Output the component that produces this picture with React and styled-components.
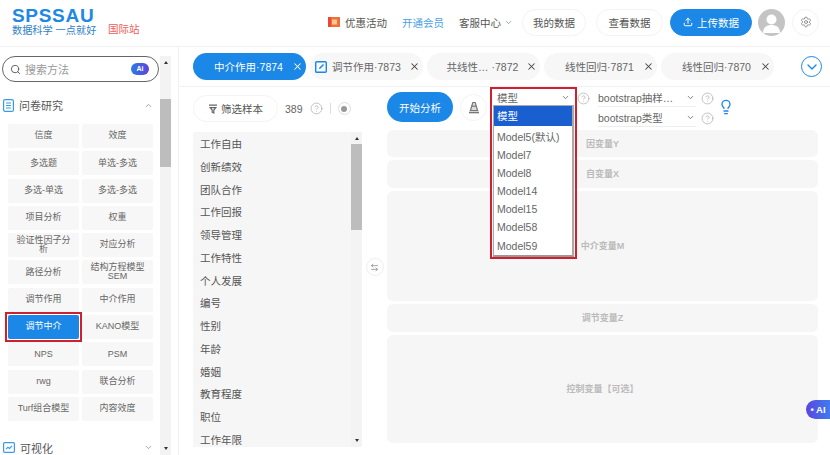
import React from "react";
import styled, { createGlobalStyle } from "styled-components";
import { Search, ChevronUp, ChevronDown, X, Settings, Lightbulb, CircleHelp, Upload, ArrowLeftRight } from "lucide-react";

const Global = createGlobalStyle`
  html, body { margin: 0; padding: 0; background: #fff; }
  body { font-family: "Liberation Sans", "Noto Sans CJK SC", sans-serif; color: #555; width: 830px; height: 455px; overflow: hidden; }
  * { box-sizing: border-box; }
`;

const Page = styled.div`
  position: relative;
  width: 830px;
  height: 455px;
  overflow: hidden;
  display: flex;
  flex-direction: column;
`;
const Header = styled.header`
  height: 47px;
  flex: none;
  display: flex;
  align-items: center;
  padding: 0 11px 2px 12px;
  border-bottom: 1px solid #f1f1f1;
`;
const Logo = styled.div`
  width: 96px;
  display: flex;
  flex-direction: column;
`;
const LogoMark = styled.div`
  font-size: 19px;
  line-height: 17px;
  font-weight: 700;
  letter-spacing: 0.7px;
  color: #1e88e5;
`;
const LogoSub = styled.div`
  font-size: 10.2px;
  line-height: 14px;
  color: #2f7fc9;
  white-space: nowrap;
`;
const Intl = styled.div`
  margin-top: 13px;
  font-size: 10.5px;
  color: #ef5a5a;
`;
const Spacer = styled.div`
  flex: 1;
`;
const NavLink = styled.div`
  display: flex;
  align-items: center;
  gap: ${(p) => p.$gap || 0}px;
  font-size: 10.5px;
  color: ${(p) => p.$color || "#555"};
  margin-right: ${(p) => p.$mr || 15}px;
`;
const HeadBtn = styled.div`
  height: 27px;
  width: ${(p) => p.$w}px;
  margin-right: ${(p) => p.$mr}px;
  border-radius: 14px;
  border: 1px solid ${(p) => (p.$primary ? "#1b87e6" : "#f3f3f3")};
  background: ${(p) => (p.$primary ? "#1b87e6" : "#fff")};
  color: ${(p) => (p.$primary ? "#fff" : "#555")};
  font-size: 10.5px;
  display: flex;
  align-items: center;
  justify-content: center;
  gap: 4px;
`;
const Avatar = styled.div`
  width: 27px;
  height: 27px;
  border-radius: 50%;
  background: #c4c4c4;
  margin-right: 7px;
  overflow: hidden;
`;
const GearBtn = styled.div`
  width: 27px;
  height: 27px;
  border-radius: 50%;
  border: 1px solid #f3f3f3;
  display: flex;
  align-items: center;
  justify-content: center;
  color: #777;
`;
const Body = styled.div`
  flex: 1;
  display: flex;
  min-height: 0;
`;
const Sidebar = styled.aside`
  width: 179px;
  flex: none;
  display: flex;
  padding: 9px 7px 0 2px;
  border-right: 1px solid #f1f1f1;
  overflow: hidden;
`;
const SideMain = styled.div`
  width: 158px;
  flex: none;
  display: flex;
  flex-direction: column;
`;
const SearchBox = styled.div`
  height: 26px;
  width: 157px;
  border: 1px solid #666;
  border-radius: 13px;
  display: flex;
  align-items: center;
  padding: 0 9px 0 7px;
  gap: 4px;
  font-size: 11px;
  color: #999;
  flex: none;
`;
const AiTag = styled.span`
  margin-left: auto;
  width: 18px;
  height: 12px;
  border-radius: 6px;
  background: linear-gradient(90deg, #2e7be8, #5a45d8);
  color: #fff;
  font-size: 7px;
  font-weight: 700;
  line-height: 12px;
  text-align: center;
`;
const SectionTitle = styled.div`
  display: flex;
  align-items: center;
  gap: 5px;
  height: 20px;
  margin-top: ${(p) => p.$mt}px;
  padding: 0 7px 0 1px;
  font-size: 11px;
  color: #555;
  flex: none;
`;
const SectionChevron = styled.span`
  margin-left: auto;
  display: flex;
  color: #888;
`;
const MethodGrid = styled.div`
  display: grid;
  grid-template-columns: 71px 71px;
  grid-auto-rows: 24px;
  column-gap: 3px;
  row-gap: 3.3px;
  margin: 9px 0 0 6px;
  flex: none;
`;
const Method = styled.div`
  position: relative;
  border-radius: 2px;
  background: ${(p) => (p.$active ? "#1b87e6" : "#f7f7f7")};
  color: ${(p) => (p.$active ? "#fff" : "#666")};
  font-size: 9px;
  line-height: 9.5px;
  display: flex;
  align-items: center;
  justify-content: center;
  text-align: center;
  padding: 0 6px;
  ${(p) =>
    p.$active &&
    `&::after {
      content: "";
      position: absolute;
      inset: -3px;
      border: 2px solid #d01f2e;
    }`}
`;
const Track = styled.div`
  width: ${(p) => p.$w}px;
  flex: none;
  background: #f3f3f3;
  display: flex;
  flex-direction: column;
  align-items: center;
`;
const Arrow = styled.div`
  width: 0;
  height: 0;
  flex: none;
  border-left: 2.5px solid transparent;
  border-right: 2.5px solid transparent;
  ${(p) => (p.$down ? "border-top: 3px solid #333;" : "border-bottom: 3px solid #333;")}
  margin: ${(p) => (p.$down ? "auto 0 5px" : "5px 0 0")};
`;
const Thumb = styled.div`
  width: 100%;
  height: ${(p) => p.$h}px;
  margin-top: ${(p) => p.$mt}px;
  background: #bdbdbd;
  flex: none;
`;
const Main = styled.main`
  flex: 1;
  display: flex;
  flex-direction: column;
  min-width: 0;
`;
const TabBar = styled.div`
  height: 40px;
  flex: none;
  display: flex;
  align-items: flex-start;
  padding: 6px 0 0 14px;
  gap: 4px;
  border-bottom: 1px solid #f1f1f1;
`;
const Tab = styled.div`
  width: 113px;
  height: 27px;
  border-radius: 14px;
  background: ${(p) => (p.$active ? "#1b87e6" : "#f7f7f7")};
  color: ${(p) => (p.$active ? "#fff" : "#666")};
  font-size: 10.5px;
  display: flex;
  align-items: center;
  justify-content: ${(p) => (p.$edit ? "flex-start" : "center")};
  gap: 5px;
  position: relative;
  padding: ${(p) => (p.$edit ? "0 0 0 5px" : "0 2px 0 0")};
  white-space: nowrap;
`;
const TabClose = styled.span`
  position: absolute;
  right: 3px;
  top: 8px;
  display: flex;
  color: ${(p) => (p.$active ? "#fff" : "#444")};
`;
const EditIcon = styled.span`
  display: flex;
  color: #1b87e6;
`;
const TabToggle = styled.div`
  width: 21px;
  height: 21px;
  border-radius: 50%;
  border: 1.5px solid #1b87e6;
  color: #1b87e6;
  display: flex;
  align-items: center;
  justify-content: center;
  margin: 3px 0 0 23px;
  flex: none;
`;
const Content = styled.div`
  flex: 1;
  display: flex;
  min-height: 0;
`;
const LeftCol = styled.div`
  width: 169px;
  margin-left: 14px;
  flex: none;
  display: flex;
  flex-direction: column;
  padding-top: 8px;
`;
const FilterRow = styled.div`
  display: flex;
  align-items: center;
  height: 27px;
  flex: none;
  font-size: 10.5px;
  color: #666;
`;
const FilterBtn = styled.div`
  width: 85px;
  height: 27px;
  border: 1px solid #f3f3f3;
  border-radius: 14px;
  display: flex;
  align-items: center;
  justify-content: center;
  gap: 3px;
  font-size: 10.5px;
  color: #555;
  margin-right: 7px;
`;
const Help = styled.span`
  display: flex;
  color: #aaa;
  margin-left: ${(p) => p.$ml || 0}px;
  flex: none;
`;
const Divider = styled.span`
  width: 1px;
  height: 11px;
  background: #ddd;
  margin: 0 7px;
`;
const DotBtn = styled.span`
  width: 13px;
  height: 13px;
  border-radius: 50%;
  border: 1px solid #ddd;
  display: flex;
  align-items: center;
  justify-content: center;
  &::after {
    content: "";
    width: 6px;
    height: 6px;
    border-radius: 50%;
    background: #999;
  }
`;
const VarList = styled.div`
  margin-top: 10px;
  height: 315px;
  background: #f6f6f6;
  border-radius: 2px;
  display: flex;
  overflow: hidden;
  flex: none;
`;
const VarItems = styled.div`
  flex: 1;
  padding: 1px 0 0 7px;
  overflow: hidden;
`;
const VarItem = styled.div`
  height: 22.75px;
  line-height: 22.75px;
  font-size: 10.5px;
  color: #555;
`;
const SwapCol = styled.div`
  width: 25px;
  flex: none;
  display: flex;
  align-items: flex-start;
  justify-content: center;
  padding-top: 171px;
`;
const SwapBtn = styled.div`
  width: 18px;
  height: 18px;
  border-radius: 50%;
  border: 1px solid #eee;
  color: #888;
  display: flex;
  align-items: center;
  justify-content: center;
`;
const RightCol = styled.div`
  width: 431px;
  flex: none;
  display: flex;
  flex-direction: column;
`;
const Toolbar = styled.div`
  height: 43px;
  flex: none;
  display: flex;
  align-items: flex-start;
  padding-top: 5px;
`;
const StartBtn = styled.div`
  width: 66px;
  height: 30px;
  border-radius: 15px;
  background: #1b87e6;
  color: #fff;
  font-size: 10.5px;
  display: flex;
  align-items: center;
  justify-content: center;
  margin-right: 7px;
`;
const RoundBtn = styled.div`
  width: 27px;
  height: 27px;
  border-radius: 50%;
  border: 1px solid #f3f3f3;
  margin: 2px 6px 0 0;
  display: flex;
  align-items: center;
  justify-content: center;
`;
const ModelWrap = styled.div`
  position: relative;
  width: 77px;
  margin: -3px 0 0 2px;
`;
const SelectLine = styled.div`
  width: ${(p) => p.$w}px;
  height: 18px;
  display: flex;
  align-items: center;
  justify-content: space-between;
  font-size: 10.5px;
  color: #666;
  border-bottom: 1px solid #eee;
  padding: 0 1px 0 ${(p) => p.$pl || 0}px;
  white-space: nowrap;
`;
const RedBox = styled.div`
  position: absolute;
  left: -5px;
  top: -2px;
  width: 87px;
  height: 172px;
  border: 2px solid #d01f2e;
  pointer-events: none;
  z-index: 3;
`;
const Dropdown = styled.div`
  position: absolute;
  left: -2px;
  top: 16px;
  width: 81px;
  height: 152px;
  background: #fff;
  border: 1px solid #aaa;
  border-bottom: 2px solid #999;
  border-right: 2px solid #aaa;
  z-index: 2;
`;
const DropItem = styled.div`
  height: ${(p) => (p.$selected ? 20 : 18.2)}px;
  line-height: ${(p) => (p.$selected ? 20 : 18.2)}px;
  padding-left: 3px;
  margin-bottom: ${(p) => (p.$selected ? 1.5 : 0)}px;
  background: ${(p) => (p.$selected ? "#1a5fd0" : "transparent")};
  color: ${(p) => (p.$selected ? "#fff" : "#666")};
  font-size: 10.5px;
  white-space: nowrap;
`;
const HelpSlot = styled.div`
  margin: 0 8px 0 5px;
  display: flex;
  color: #aaa;
`;
const BootCol = styled.div`
  display: flex;
  flex-direction: column;
  gap: 2px;
  margin-top: -3px;
`;
const BootRow = styled.div`
  display: flex;
  align-items: center;
  gap: 5px;
`;
const Bulb = styled.div`
  display: flex;
  color: #1b87e6;
  margin: 7px 0 0 4px;
`;
const Zones = styled.div`
  display: flex;
  flex-direction: column;
  gap: 3px;
`;
const Zone = styled.div`
  height: ${(p) => p.$h}px;
  background: #f6f6f6;
  border-radius: 6px;
  display: flex;
  align-items: center;
  justify-content: center;
  font-size: 9px;
  font-weight: 700;
  color: #bbb;
  padding-bottom: 1px;
`;
const AiFloat = styled.div`
  position: absolute;
  right: 0;
  top: 400px;
  width: 24px;
  height: 19px;
  border-radius: 10px 0 0 10px;
  background: linear-gradient(90deg, #5a45e0, #3f7bf0);
  color: #fff;
  font-size: 9.5px;
  font-weight: 700;
  display: flex;
  align-items: center;
  justify-content: center;
  gap: 2px;
  z-index: 5;
`;

const methods = [
  "信度", "效度", "多选题", "单选-多选", "多选-单选", "多选-多选", "项目分析", "权重",
  "验证性因子分析", "对应分析", "路径分析", "结构方程模型SEM", "调节作用", "中介作用",
  "调节中介", "KANO模型", "NPS", "PSM", "rwg", "联合分析", "Turf组合模型", "内容效度",
];
const vars = ["工作自由", "创新绩效", "团队合作", "工作回报", "领导管理", "工作特性", "个人发展", "编号", "性别", "年龄", "婚姻", "教育程度", "职位", "工作年限"];
const tabs = [
  { label: "中介作用·7874", active: true },
  { label: "调节作用·7873", edit: true },
  { label: "共线性…  ·7872" },
  { label: "线性回归·7871" },
  { label: "线性回归·7870" },
];
const models = ["Model5(默认)", "Model7", "Model8", "Model14", "Model15", "Model58", "Model59"];
const zones = [
  ["因变量Y", 27], ["自变量X", 28], ["中介变量M", 110], ["调节变量Z", 28], ["控制变量【可选】", 108],
];

const PromoIcon = () => (
  <svg width="12" height="10" viewBox="0 0 12 10">
    <rect width="12" height="10" fill="#f0703c" />
    <rect x="0" y="0" width="3" height="10" fill="#e8473a" />
    <rect x="4" y="2.5" width="5" height="5" fill="#ffc98a" />
  </svg>
);
const AvatarIcon = () => (
  <svg width="27" height="27" viewBox="0 0 27 27">
    <circle cx="13.5" cy="10.5" r="5" fill="#fff" />
    <path d="M5 24c0-6 4-8 8.5-8s8.5 2 8.5 8z" fill="#fff" />
  </svg>
);
const FunnelIcon = () => (
  <svg width="10" height="10" viewBox="0 0 10 10" fill="none" stroke="#666" strokeWidth="1.2">
    <path d="M1 1.2h8M2.2 3.6h5.6L5.8 6v3l-1.6-.8V6z" />
  </svg>
);
const ConeIcon = () => (
  <svg width="12" height="13" viewBox="0 0 12 13" fill="none" stroke="#777" strokeWidth="1.2">
    <path d="M4.8 1.5h2.4L9.6 9.5H2.4z" fill="#ddd" />
    <path d="M4 5.2h4" />
    <path d="M1 11.5h10" strokeWidth="1.6" />
  </svg>
);
const SheetIcon = () => (
  <svg width="11" height="13" viewBox="0 0 11 13" fill="none" stroke="#3a9ae8" strokeWidth="1.2">
    <rect x="0.6" y="0.6" width="9.8" height="11.8" rx="1.5" />
    <path d="M3 4h5M3 6.5h5M3 9h5" />
  </svg>
);
const TrendIcon = () => (
  <svg width="12" height="11" viewBox="0 0 12 11" fill="none" stroke="#3a9ae8" strokeWidth="1.2">
    <rect x="0.6" y="0.6" width="10.8" height="9.8" rx="1.2" />
    <path d="M3 7.2l2-2 1.6 1.2L9 3.8" />
  </svg>
);

const Q = ({ size = 13 }) => <CircleHelp size={size} strokeWidth={1.3} />;
const SelChevron = () => <ChevronDown size={9} color="#555" strokeWidth={2} />;

export default function App() {
  return (
    <Page>
      <Global />
      <Header>
        <Logo>
          <LogoMark>SPSSAU</LogoMark>
          <LogoSub>数据科学 一点就好</LogoSub>
        </Logo>
        <Intl>国际站</Intl>
        <Spacer />
        <NavLink $gap={5}><PromoIcon />优惠活动</NavLink>
        <NavLink $color="#4a9fe8">开通会员</NavLink>
        <NavLink $mr={9} $gap={3}>客服中心<ChevronDown size={9} color="#888" /></NavLink>
        <HeadBtn $w={64} $mr={10}>我的数据</HeadBtn>
        <HeadBtn $w={67} $mr={7}>查看数据</HeadBtn>
        <HeadBtn $w={82} $mr={6} $primary><Upload size={10} strokeWidth={2.4} />上传数据</HeadBtn>
        <Avatar><AvatarIcon /></Avatar>
        <GearBtn><Settings size={12} strokeWidth={1.5} /></GearBtn>
      </Header>
      <Body>
        <Sidebar>
          <SideMain>
            <SearchBox>
              <Search size={11} color="#555" />
              搜索方法
              <AiTag>Ai</AiTag>
            </SearchBox>
            <SectionTitle $mt={13}>
              <SheetIcon />
              问卷研究
              <SectionChevron><ChevronUp size={9} /></SectionChevron>
            </SectionTitle>
            <MethodGrid>
              {methods.map((m) => <Method key={m} $active={m === "调节中介"}>{m}</Method>)}
            </MethodGrid>
            <SectionTitle $mt={17}>
              <TrendIcon />
              可视化
              <SectionChevron><ChevronDown size={9} /></SectionChevron>
            </SectionTitle>
          </SideMain>
          <Track $w={11}>
            <Arrow />
            <Thumb $h={68} $mt={35} />
            <Arrow $down />
          </Track>
        </Sidebar>
        <Main>
          <TabBar>
            {tabs.map((t) => (
              <Tab key={t.label} $active={t.active} $edit={t.edit}>
                {t.edit && <EditIcon><svg width="12" height="12" viewBox="0 0 12 12"><rect x="0.7" y="0.7" width="10.6" height="10.6" rx="1" fill="none" stroke="#1b87e6" strokeWidth="1.4" /><path d="M4 8l.4-1.6L8 3l1 1-3.4 3.6z" fill="#1b87e6" /></svg></EditIcon>}
                {t.label}
                <TabClose $active={t.active}><X size={11} strokeWidth={2.2} /></TabClose>
              </Tab>
            ))}
            <TabToggle><ChevronDown size={16} strokeWidth={2} /></TabToggle>
          </TabBar>
          <Content>
            <LeftCol>
              <FilterRow>
                <FilterBtn><FunnelIcon />筛选样本</FilterBtn>
                389
                <Help $ml={7}><Q /></Help>
                <Divider />
                <DotBtn />
              </FilterRow>
              <VarList>
                <VarItems>
                  {vars.map((v) => <VarItem key={v}>{v}</VarItem>)}
                </VarItems>
                <Track $w={11}>
                  <Arrow />
                  <Thumb $h={86} $mt={4} />
                  <Arrow $down />
                </Track>
              </VarList>
            </LeftCol>
            <SwapCol>
              <SwapBtn><ArrowLeftRight size={9} /></SwapBtn>
            </SwapCol>
            <RightCol>
              <Toolbar>
                <StartBtn>开始分析</StartBtn>
                <RoundBtn><ConeIcon /></RoundBtn>
                <ModelWrap>
                  <SelectLine $w={76} $pl={2}>模型<SelChevron /></SelectLine>
                  <RedBox />
                  <Dropdown>
                    <DropItem $selected>模型</DropItem>
                    {models.map((m) => <DropItem key={m}>{m}</DropItem>)}
                  </Dropdown>
                </ModelWrap>
                <HelpSlot><Q /></HelpSlot>
                <BootCol>
                  <BootRow><SelectLine $w={98}>bootstrap抽样…<SelChevron /></SelectLine><Help><Q /></Help></BootRow>
                  <BootRow><SelectLine $w={98}>bootstrap类型<SelChevron /></SelectLine><Help><Q /></Help></BootRow>
                </BootCol>
                <Bulb><Lightbulb size={16} strokeWidth={2} /></Bulb>
              </Toolbar>
              <Zones>
                {zones.map(([label, h]) => <Zone key={label} $h={h}>{label}</Zone>)}
              </Zones>
            </RightCol>
          </Content>
        </Main>
      </Body>
      <AiFloat>• AI</AiFloat>
    </Page>
  );
}
